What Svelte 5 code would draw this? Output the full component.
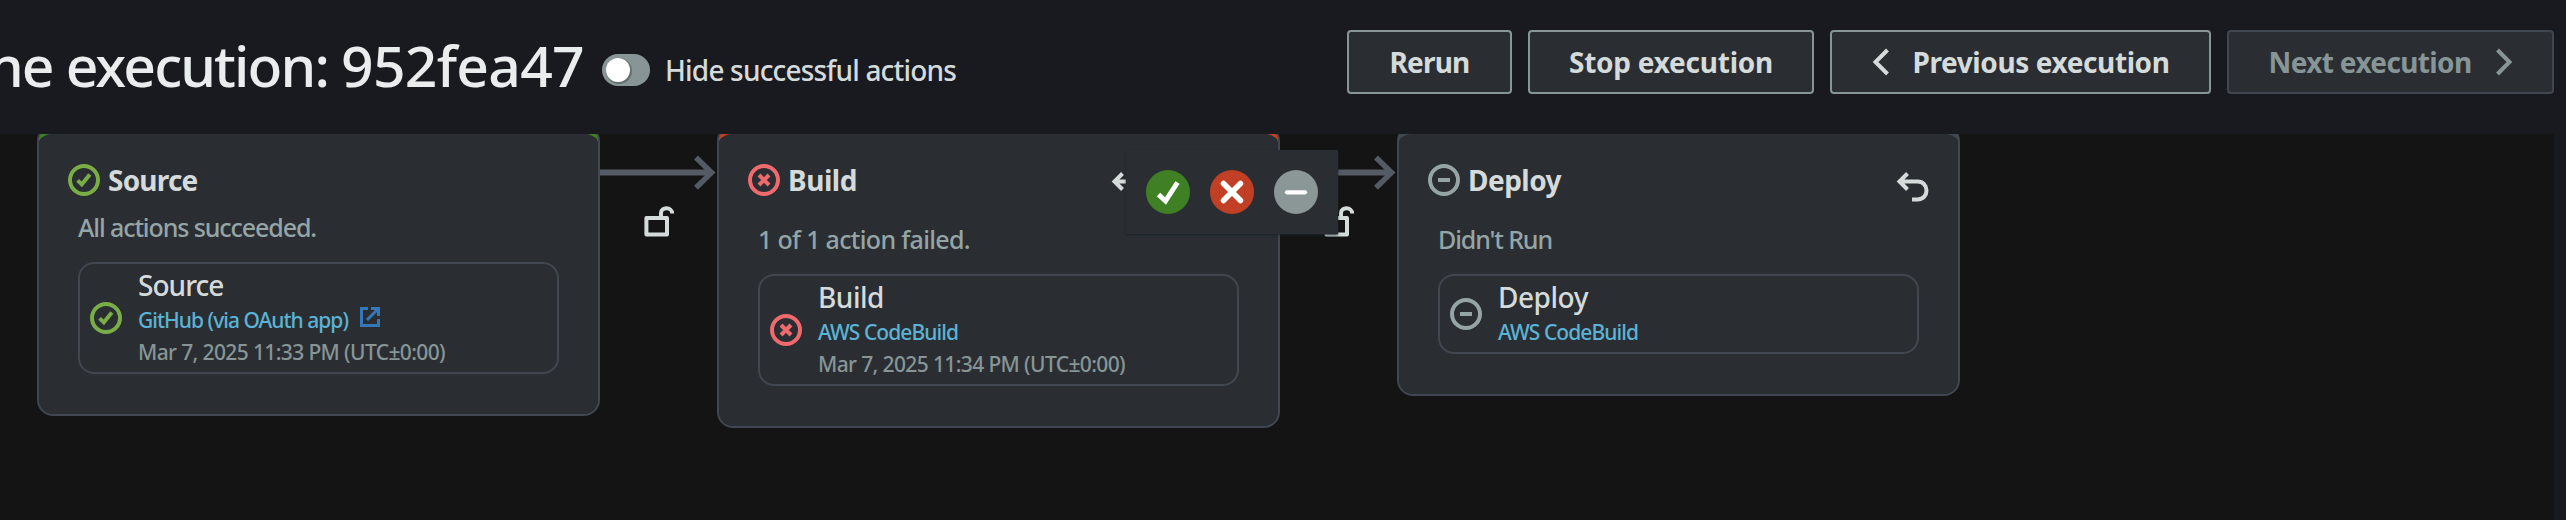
<script>
  const stages = [
    {
      name: 'Source', status: 'ok', accent: 'green', note: 'All actions succeeded.', nw: 238,
      undo: '', tw: 89.5,
      action: { name: 'Source', w: 85.5, provider: 'GitHub (via OAuth app)', pw: 210, external: true, time: 'Mar 7, 2025 11:33 PM (UTC±0:00)' }
    },
    {
      name: 'Build', status: 'fail', accent: 'red', note: '1 of 1 action failed.', nw: 212,
      undo: 'wide', tw: 69,
      action: { name: 'Build', w: 66, provider: 'AWS CodeBuild', pw: 140, external: false, time: 'Mar 7, 2025 11:34 PM (UTC±0:00)' }
    },
    {
      name: 'Deploy', status: 'none', accent: 'grey', note: "Didn't Run", nw: 114,
      undo: 'end', tw: 93,
      action: { name: 'Deploy', w: 90, provider: 'AWS CodeBuild', pw: 140, external: false, time: '' }
    }
  ];

  // Tightens or loosens the tracking of a label so that it fills its column width.
  function fit(node, width) {
    const natural = node.getBoundingClientRect().width;
    const count = node.textContent.length;
    node.style.letterSpacing = (width - natural) / count + 'px';
  }
</script>

{#snippet statusIcon(kind)}
  <svg class="status {kind}" viewBox="0 0 16 16" fill="none" stroke="currentColor" stroke-width="2">
    <circle cx="8" cy="8" r="7" />
    {#if kind === 'ok'}
      <path d="M4.800 8.200 6.900 10.200 10.900 5.200" />
    {:else if kind === 'fail'}
      <path d="M5.500 5.500 10.500 10.500M10.500 5.500 5.500 10.500" />
    {:else}
      <path d="M5 8H11" />
    {/if}
  </svg>
{/snippet}

{#snippet connector()}
  <div class="connector">
    <svg class="arrow" width="117" height="36" viewBox="0 0 117 36" fill="none" stroke="#545b64" stroke-width="6">
      <path d="M0 18.600H111" /><path d="M96 3.500 111.500 18.600 96 33.700" stroke-width="5.500" />
    </svg>
    <svg class="lock" width="32" height="34" viewBox="0 0 32 34" fill="none" stroke="#d5dbdb" stroke-width="4">
      <rect x="2.400" y="14" width="20.600" height="16.400" stroke-linejoin="round" />
      <path d="M17 14V9C17 2.700 28.200 2.700 28.200 9.600" />
    </svg>
  </div>
{/snippet}

<div class="page">
  <header>
    <h1><span use:fit={353}>{'ne execution: '}</span><span use:fit={243}>952fea47</span></h1>
    <span class="toggle"><i></i></span>
    <span class="toggle-label"><span use:fit={291}>Hide successful actions</span></span>
    <div class="buttons">
      <button style:width="165px"><span use:fit={80}>Rerun</span></button>
      <button style:width="286px"><span use:fit={204}>Stop execution</span></button>
      <button class="prev" style:width="381px">
        <svg width="18" height="28" viewBox="0 0 18 28"><path d="M15.500 2 3.500 14 15.500 26" /></svg>
        <span use:fit={257}>Previous execution</span>
      </button>
      <button class="next" style:width="327px" disabled>
        <span use:fit={203}>Next execution</span>
        <svg width="18" height="28" viewBox="0 0 18 28"><path d="M2.500 2 14.500 14 2.500 26" /></svg>
      </button>
    </div>
  </header>

  <main>
    {#each stages as s, i}
      {#if i > 0}{@render connector()}{/if}
      <section class="card {s.accent}">
        <div class="body">
          <div class="head" class:tall={s.undo}>
            {@render statusIcon(s.status)}
            <h2><span use:fit={s.tw}>{s.name}</span></h2>
            {#if s.undo}
              <svg class="undo {s.undo}" width="34" height="32" viewBox="0 0 34 32" fill="none" stroke="#d5dbdb" stroke-width="4">
                <path d="M11.500 2.500 3.500 10.500 11.500 18.500M3.500 10.500H21.500C33.500 10.500 33.500 28.500 21.500 28.500H16" />
              </svg>
            {/if}
          </div>
          <p><span use:fit={s.nw}>{s.note}</span></p>
          <div class="action">
            {@render statusIcon(s.status)}
            <div class="detail">
              <div class="name"><span use:fit={s.action.w}>{s.action.name}</span></div>
              <div class="provider">
                <span use:fit={s.action.pw}>{s.action.provider}</span>
                {#if s.action.external}
                  <svg width="20" height="20" viewBox="0 0 20 20" fill="none" stroke="#3578b9" stroke-width="3">
                    <path d="M8 1.500H1.500V18.500H18.500V12M11 1.500H18.500V9M18.500 1.500 7 13" />
                  </svg>
                {/if}
              </div>
              {#if s.action.time}<div class="time"><span use:fit={307}>{s.action.time}</span></div>{/if}
            </div>
          </div>
        </div>
      </section>
    {/each}
  </main>

  <div class="popover">
    <svg width="44" height="44" viewBox="0 0 44 44" fill="none" stroke="#fff">
      <circle cx="22" cy="22" r="22" fill="#3f8024" stroke="none" />
      <path d="M12.500 24.500 19.500 31 31.500 12.500" stroke-width="5" />
    </svg>
    <svg width="44" height="44" viewBox="0 0 44 44" fill="none" stroke="#fff">
      <circle cx="22" cy="22" r="22" fill="#c14025" stroke="none" />
      <path d="M13.500 13.500 30.500 30.500M30.500 13.500 13.500 30.500" stroke-width="5.500" stroke-linecap="round" />
    </svg>
    <svg width="44" height="44" viewBox="0 0 44 44" fill="none" stroke="#fff">
      <circle cx="22" cy="22" r="22" fill="#8b9696" stroke="none" />
      <path d="M13 22.300H31" stroke-width="4.300" stroke-linecap="round" />
    </svg>
  </div>
</div>

<style>
  :global(body) { background: #191a1f; }
  .page {
    position: relative; width: 2566px; height: 520px; overflow: hidden; background: #191a1f;
    font-family: "Noto Sans", "Open Sans", sans-serif; font-weight: 500; color: #d5dbdb;
    display: flex; flex-direction: column;
  }
  .page * { box-sizing: border-box; }
  span { white-space: pre; }
  h1 span, h2 span, p span, button span, .toggle-label span, .detail span { display: inline-block; }
  svg { display: block; flex: none; }
  header {
    position: relative; z-index: 1; flex: none; height: 134px; padding-right: 12px; background: #191a1f;
    display: flex; align-items: flex-start;
  }
  h1 { margin: 27px 0 0; width: 584px; flex: none; display: flex; justify-content: flex-end; font-size: 57px; line-height: 76px; font-weight: 500; color: #eaeded; }
  h1 span { flex: none; }
  .toggle { margin: 54px 0 0 18px; width: 48px; height: 32px; border-radius: 16px; background: #879596; padding: 4px; flex: none; }
  .toggle i { display: block; width: 24px; height: 24px; border-radius: 50%; background: #fff; box-shadow: 1px 1px 0 1px rgba(0, 0, 0, .25); }
  .toggle-label { margin: 50px 0 0 15px; font-size: 28px; line-height: 40px; }
  .buttons { margin: 30px 0 0 auto; display: flex; gap: 16px; }
  button {
    height: 64px; padding: 0; border: 2px solid #879596; border-radius: 4px; background: #2a2e33; color: #d5dbdb;
    font: 700 28px/40px "Noto Sans", "Open Sans", sans-serif; display: flex; align-items: center; justify-content: center;
  }
  button svg { fill: none; stroke: currentColor; stroke-width: 4; }
  .prev { gap: 23px; }
  .next { gap: 23px; color: #879596; border-color: #414750; }

  main { flex: none; width: 2554px; height: 386px; padding-left: 37px; background: #141414; display: flex; align-items: flex-start; }
  .card { flex: none; width: 563px; margin-top: -9px; padding-top: 6px; border: 2px solid #414750; border-radius: 16px; overflow: hidden; }
  .body { padding: 31px 39px 40px; background: #2a2e33; border-radius: 20px 20px 14px 14px / 9px 9px 14px 14px; }
  .green { background: linear-gradient(#3f8024 40px, #2a2e33 40px); }
  .red { background: linear-gradient(#c14025 40px, #2a2e33 40px); }
  .grey { background: linear-gradient(#414750 40px, #2a2e33 40px); }
  .head { height: 48px; margin-left: -10px; display: flex; }
  .head.tall { height: 60px; }
  h2 { margin: -4px 0 0 8px; font-size: 28px; line-height: 40px; font-weight: 700; }
  .undo { margin-left: auto; margin-top: 7px; }
  .undo.end { margin-right: -11px; }
  .undo.wide { margin-right: 94px; }
  p { margin: -1px 0 0; font-size: 25px; line-height: 32px; color: #95a5a6; }
  .action { margin-top: 19px; padding: 4px 10px; border: 2px solid #414750; border-radius: 16px; display: flex; align-items: center; }
  .detail { margin-left: 16px; }
  .name { font-size: 28px; line-height: 34px; padding-bottom: 2px; }
  .provider { font-size: 21px; line-height: 32px; color: #5bb3d6; display: flex; align-items: center; gap: 12px; }
  .provider svg { margin-top: -6px; }
  .time { font-size: 21px; line-height: 32px; color: #879596; }
  .status { width: 32px; height: 32px; }
  .ok { color: #7aad45; }
  .fail { color: #ef6a6c; }
  .none { color: #95a5a6; }
  .connector { width: 117px; flex: none; padding-top: 20px; }
  .lock { margin: 14px 0 0 44px; }

  .popover {
    position: absolute; z-index: 2; left: 1126px; top: 150px; width: 212px; height: 84px; padding: 0 20px;
    display: flex; align-items: center; gap: 20px; background: #2a2e33; box-shadow: 0 1px 2px 0 #17262b;
  }
</style>
